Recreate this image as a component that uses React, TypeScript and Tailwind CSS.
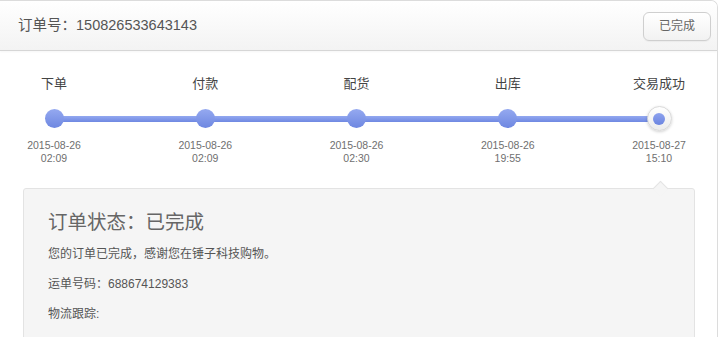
import React from "react";

const steps = [
  { label: "下单", date: "2015-08-26", time: "02:09" },
  { label: "付款", date: "2015-08-26", time: "02:09" },
  { label: "配货", date: "2015-08-26", time: "02:30" },
  { label: "出库", date: "2015-08-26", time: "19:55" },
  { label: "交易成功", date: "2015-08-27", time: "15:10" },
];

export default function App() {
  return (
    <div
      className="w-[720px] h-[337px] overflow-hidden bg-white"
      style={{ fontFamily: '"Liberation Sans", Arial, "Noto Sans CJK SC", sans-serif' }}
    >
      <div className="w-[718px] h-[337px] border-r border-t border-[#dcdcdc] rounded-tr-[7px] overflow-hidden">
        {/* header */}
        <div className="h-[50px] flex items-center justify-between pl-[18px] pr-[6px] bg-gradient-to-b from-white to-[#f3f3f3] border-b border-[#d6d6d6] shadow-[0_1px_2px_rgba(0,0,0,0.04)]">
          <div className="text-[14.5px] text-[#555]">订单号：150826533643143</div>
          <button className="w-[68px] h-[29px] mt-[1px] rounded-[6px] border border-[#cfcfcf] bg-gradient-to-b from-white to-[#f2f2f2] text-[12px] text-[#666] shadow-[0_1px_1px_rgba(0,0,0,0.04)]">
            已完成
          </button>
        </div>

        {/* timeline */}
        <div className="ml-[14px] w-[685px] pt-[25px]">
          <div className="flex justify-between">
            {steps.map((s) => (
              <div key={s.label} className="w-[80px] text-center text-[13px] leading-[16px] text-[#444]">
                {s.label}
              </div>
            ))}
          </div>
          <div className="relative mt-[14px] h-[25px] flex justify-between">
            <div className="absolute left-[40px] right-[40px] top-[9.5px] h-[6px] bg-gradient-to-b from-[#93a8f0] to-[#6f88e2]" />
            {steps.map((s, i) => (
              <div key={s.label} className="relative w-[80px] flex items-center justify-center">
                {i < steps.length - 1 ? (
                  <div className="w-[19px] h-[19px] rounded-full bg-gradient-to-b from-[#95a9f0] to-[#6e87e1]" />
                ) : (
                  <div className="w-[25px] h-[25px] rounded-full bg-gradient-to-b from-white to-[#ececec] border border-[#d8d8d8] shadow-[0_1px_3px_rgba(0,0,0,0.18)] flex items-center justify-center">
                    <div className="w-[12px] h-[12px] rounded-full bg-gradient-to-b from-[#8da2ee] to-[#6c85e0]" />
                  </div>
                )}
              </div>
            ))}
          </div>
          <div className="mt-[8px] flex justify-between">
            {steps.map((s) => (
              <div key={s.label} className="w-[80px] text-center text-[10.5px] leading-[13px] text-[#6f6f6f]">
                <div>{s.date}</div>
                <div>{s.time}</div>
              </div>
            ))}
          </div>
        </div>

        {/* info box */}
        <div className="relative ml-[23px] mt-[23px] w-[672px] h-[160px] rounded-[3px] border border-[#e3e3e3] bg-[#f5f5f5] pl-[24px] pt-[21px]">
          <div className="absolute -top-[6px] left-[631px] w-[11px] h-[11px] rotate-45 border-l border-t border-[#e3e3e3] bg-[#f5f5f5]" />
          <div className="text-[19.5px] leading-[24px] text-[#666]">订单状态：已完成</div>
          <div className="mt-[5px] text-[12px] leading-[30px] text-[#555]">您的订单已完成，感谢您在锤子科技购物。</div>
          <div className="text-[12px] leading-[30px] text-[#555]">运单号码：688674129383</div>
          <div className="text-[12px] leading-[30px] text-[#555]">物流跟踪:</div>
        </div>
      </div>
    </div>
  );
}
